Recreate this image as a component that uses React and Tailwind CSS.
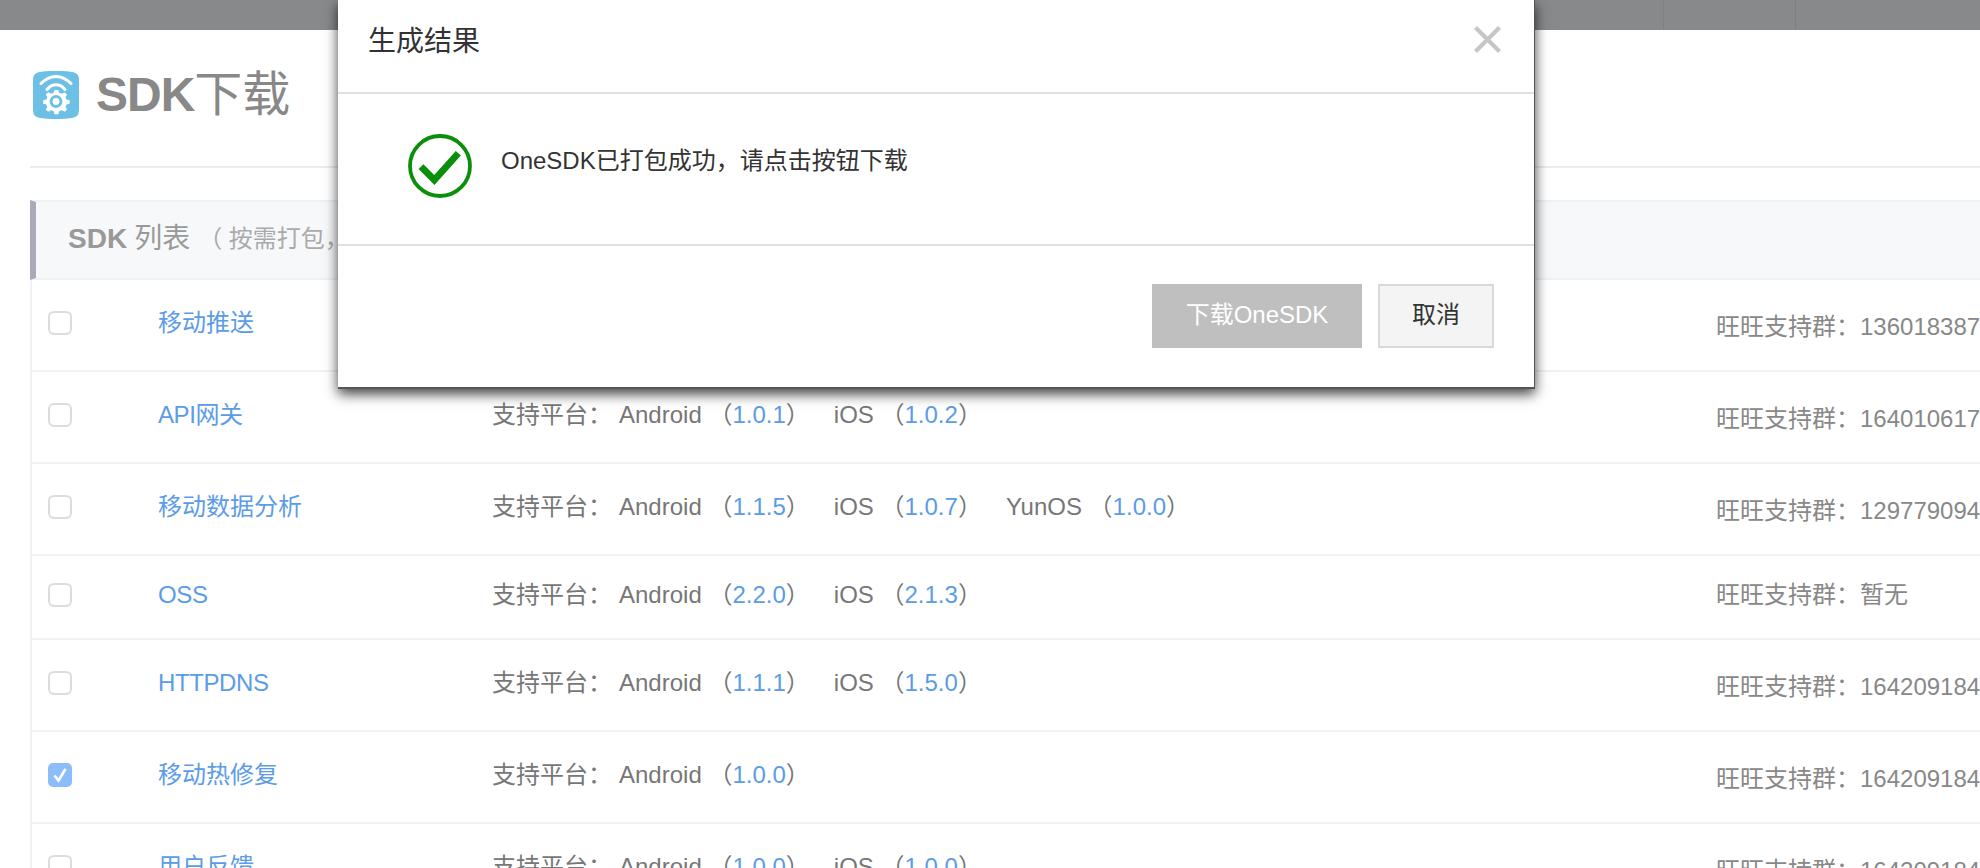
import React from "react";

const FONT = "font-['Liberation_Sans','Noto_Sans_CJK_SC',sans-serif]";

const rows = [
  { name: "移动推送", h: "h-[92px]", plats: [["Android", "3.0.0"], ["iOS", "3.0.0"]], qq: "136018387" },
  { name: "API网关", latin: true, h: "h-[92px]", plats: [["Android", "1.0.1"], ["iOS", "1.0.2"]], qq: "164010617" },
  { name: "移动数据分析", h: "h-[92px]", plats: [["Android", "1.1.5"], ["iOS", "1.0.7"], ["YunOS", "1.0.0"]], qq: "129779094" },
  { name: "OSS", latin: true, h: "h-[84px]", plats: [["Android", "2.2.0"], ["iOS", "2.1.3"]], qq: null },
  { name: "HTTPDNS", latin: true, h: "h-[92px]", plats: [["Android", "1.1.1"], ["iOS", "1.5.0"]], qq: "164209184" },
  { name: "移动热修复", h: "h-[92px]", plats: [["Android", "1.0.0"]], qq: "164209184", checked: true },
  { name: "用户反馈", h: "h-[92px]", plats: [["Android", "1.0.0"], ["iOS", "1.0.0"]], qq: "164209184" },
];

function Check({ checked }) {
  if (checked) {
    return (
      <span className="flex h-6 w-6 items-center justify-center rounded-[5px] bg-[#8dbdf8]">
        <svg viewBox="0 0 24 24" className="h-6 w-6" fill="none" stroke="#fff" strokeWidth="2.6">
          <path d="M6.5 12.5 L10.5 17.5 L17.5 6" />
        </svg>
      </span>
    );
  }
  return <span className="block h-6 w-6 rounded-[6px] border-2 border-[#dcdcdc] bg-white" />;
}

function Row({ r }) {
  return (
    <div className={`flex ${r.h} shrink-0 items-center border-b-2 border-[#eef1f5] pb-[6px] text-[24px] leading-[32px] whitespace-nowrap`}>
      <div className="w-[126px] shrink-0 pt-[2px] pl-4">
        <Check checked={r.checked} />
      </div>
      <a className={`w-[334px] shrink-0 pt-[2px] text-[#5c9ce6] ${r.latin ? "tracking-[-0.4px]" : ""}`}>{r.name}</a>
      <div className="flex w-[1224px] shrink-0 pt-[2px] text-[#777]">
        <span className="mr-[7px]">支持平台： </span>
        {r.plats.map(([p, v]) => (
          <span key={p} className="mr-6">
            {p} （<span className="text-[#5c9ce6]">{v}</span>）
          </span>
        ))}
      </div>
      <div className={`shrink-0 text-[#888] ${r.qq ? "pt-[9px]" : "pt-[2px]"}`}>旺旺支持群：{r.qq || "暂无"}</div>
    </div>
  );
}

function Logo() {
  return (
    <svg viewBox="0 0 48 48" className="h-12 w-12 shrink-0">
      <path d="M8 1 C18 -0.5 30 -0.5 40 1 C45 1.8 47 4 47 9 L47 38 C47 44 45 46 40 47 C30 48.5 18 48.5 8 47 C3 46 1 44 1 38 L1 9 C1 4 3 1.8 8 1 Z" fill="#6cc0e6" />
      <g fill="none" stroke="#fff" strokeWidth="3" strokeLinecap="round">
        <path d="M9 12.5 C18 3 30 3 39 12.5" />
        <path d="M15 18.5 C20 12 28 12 33 18.5" />
      </g>
      <path transform="translate(24 30.5) scale(1.05 0.96) translate(-24 -30)" d="M24 18 l2.2 0 .8 3 2.6 1 2.6-1.6 2.4 2.4 -1.6 2.6 1 2.6 3 .8 0 3.6 -3 .8 -1 2.6 1.6 2.6 -2.4 2.4 -2.6-1.6 -2.6 1 -.8 3 -3.6 0 -.8-3 -2.6-1 -2.6 1.6 -2.4-2.4 1.6-2.6 -1-2.6 -3-.8 0-3.6 3-.8 1-2.6 -1.6-2.6 2.4-2.4 2.6 1.6 2.6-1 .8-3 z" fill="#fff" />
      <circle cx="24" cy="30.5" r="6.4" fill="#6cc0e6" />
      <circle cx="24" cy="30.5" r="3.4" fill="#fff" />
    </svg>
  );
}

export default function App() {
  return (
    <div className={`relative h-[868px] w-full overflow-hidden bg-white ${FONT}`}>
      <header className="flex h-[30px] justify-end bg-[#87898b]">
        <div className="w-[132px] border-l border-[#7e8082]" />
        <div className="w-[185px] border-l border-[#7e8082]" />
      </header>

      <main className="pl-[30px]">
        <div className="flex h-[138px] items-start border-b-2 border-[#ececec] pt-[41px]">
          <div className="ml-[2px] flex items-center gap-[16px]">
            <Logo />
            <h1 className="text-[48px] leading-[48px] text-[#888]">
              <span className="font-bold tracking-[-1px]">SDK</span>下载
            </h1>
          </div>
        </div>

        <div className="mt-[32px] flex h-[80px] items-center border-y-2 border-[#eef1f5] border-l-[6px] border-l-[#aaaabb] bg-[#f7f8fa] pb-[2px] pl-[32px] whitespace-nowrap text-[#aaa]">
          <span className="text-[28px] font-bold text-[#999]">SDK</span>
          <span className="ml-[7px] text-[28px] text-[#999]">列表</span>
          <span className="ml-[8px] text-[24px]">（ 按需打包，一键集成 ）</span>
        </div>

        <div className="flex flex-col border-l-2 border-[#eef1f5]">
          {rows.map((r) => (
            <Row key={r.name} r={r} />
          ))}
        </div>
      </main>

      <div className="absolute top-0 left-[338px] flex h-[389px] w-[1197px] flex-col border-r border-b-2 border-[#555] bg-white shadow-[0_5px_12px_rgba(0,0,0,0.75)]">
        <div className="flex h-[94px] shrink-0 items-start justify-between border-b-2 border-[#e0e0e0] pt-[24px] pr-[33px] pl-[30px]">
          <h2 className="text-[28px] leading-[36px] text-[#333]">生成结果</h2>
          <svg viewBox="0 0 27 27" className="mt-[2px] h-[27px] w-[27px]" fill="none" stroke="#c6c6c6" strokeWidth="4.2">
            <path d="M1.5 1.5 L25.5 25.5 M25.5 1.5 L1.5 25.5" />
          </svg>
        </div>
        <div className="flex h-[152px] shrink-0 items-start border-b-2 border-[#e0e0e0] pt-[40px] pl-[70px]">
          <svg viewBox="0 0 64 64" className="h-16 w-16 shrink-0" fill="none" stroke="#0a8f0a">
            <circle cx="32" cy="32" r="30" strokeWidth="3.8" />
            <path d="M13 32.7 L26.3 46 L50.3 19.3" strokeWidth="6.8" />
          </svg>
          <p className="mt-[11px] ml-[29px] text-[24px] leading-[32px] text-[#333]">OneSDK已打包成功，请点击按钮下载</p>
        </div>
        <div className="flex flex-1 items-start justify-end gap-4 pt-[38px] pr-[40px]">
          <button className="h-16 w-[210px] bg-[#bfbfbf] pb-[2px] text-[24px] text-white">下载OneSDK</button>
          <button className="h-16 w-[116px] border-2 border-[#d9d9d9] bg-[#f4f4f4] pb-[2px] text-[24px] text-[#333]">取消</button>
        </div>
      </div>
    </div>
  );
}
